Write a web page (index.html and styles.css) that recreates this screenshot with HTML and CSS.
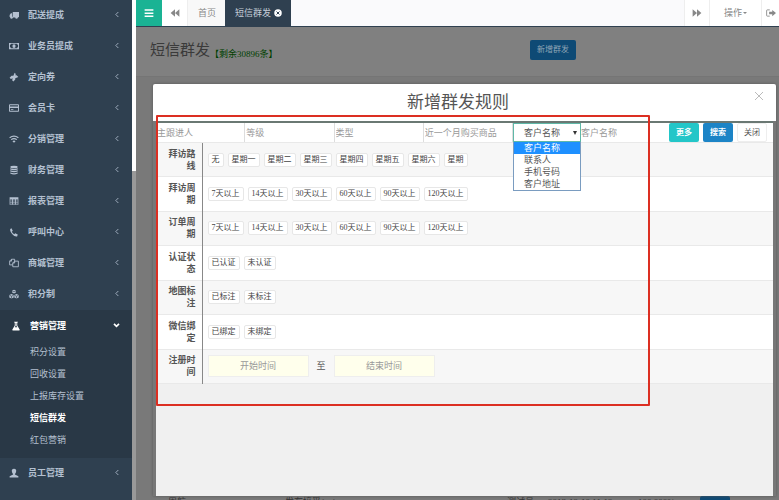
FILE: index.html
```html
<!DOCTYPE html>
<html lang="zh-CN">
  <head>
    <meta charset="UTF-8" />
    <meta name="viewport" content="width=device-width, initial-scale=1.0" />
    <title>短信群发</title>
    <link rel="stylesheet" href="styles.css">
  </head>
  <body>
    <nav class="sidebar">
      <ul class="menu">
        <li><a class="menu-item" href="#"><svg class="icon" viewBox="0 0 16 16"><path d="M6 3h10v8H6zM1 8l2-3h2v6H1zM2 11h13v1H2z"/><circle cx="4" cy="12" r="2"/><circle cx="12" cy="12" r="2"/></svg>配送提成<svg class="arrow" viewBox="0 0 6 8"><path d="M4 1L1 4l3 3"/></svg></a></li>
        <li><a class="menu-item" href="#"><svg class="icon" viewBox="0 0 16 16"><path fill-rule="evenodd" d="M0 3h16v10H0zM3 4.500a2 2 0 0 1-1.500 2v3a2 2 0 0 1 1.500 2h10a2 2 0 0 1 1.500-2v-3a2 2 0 0 1-1.500-2z"/><ellipse cx="8" cy="8" rx="2.500" ry="3"/></svg>业务员提成<svg class="arrow" viewBox="0 0 6 8"><path d="M4 1L1 4l3 3"/></svg></a></li>
        <li><a class="menu-item" href="#"><svg class="icon" viewBox="0 0 16 16"><path d="M9 1l2 2-1 2 2 0 3 3-3 1-2 1 0 2-3 3-2-2 1-3-3 1-2-2 3-3 3 0z"/></svg>定向券<svg class="arrow" viewBox="0 0 6 8"><path d="M4 1L1 4l3 3"/></svg></a></li>
        <li><a class="menu-item" href="#"><svg class="icon" viewBox="0 0 16 16"><path fill-rule="evenodd" d="M1 2h14l1 1v10l-1 1H1l-1-1V3zM1.500 3.500v2h13v-2zM1.500 8v4.500h13V8zM3 10h4v1H3z"/></svg>会员卡<svg class="arrow" viewBox="0 0 6 8"><path d="M4 1L1 4l3 3"/></svg></a></li>
        <li><a class="menu-item" href="#"><svg class="icon" viewBox="0 0 16 16"><path class="line" d="M1 6q7-5 14 0M3.500 9q4.500-3.500 9 0"/><path d="M5.500 11.500q2.500-2 5 0L8 14z"/></svg>分销管理<svg class="arrow" viewBox="0 0 6 8"><path d="M4 1L1 4l3 3"/></svg></a></li>
        <li><a class="menu-item" href="#"><svg class="icon" viewBox="0 0 16 16"><ellipse cx="8" cy="3" rx="6" ry="2"/><path d="M2 5q6 2.500 12 0v2q-6 2.500-12 0zM2 8.500q6 2.500 12 0v2q-6 2.500-12 0zM2 12q6 2.500 12 0v1.500q-6 3-12 0z"/></svg>财务管理<svg class="arrow" viewBox="0 0 6 8"><path d="M4 1L1 4l3 3"/></svg></a></li>
        <li><a class="menu-item" href="#"><svg class="icon" viewBox="0 0 16 16"><path fill-rule="evenodd" d="M1 2h14v12H1zM2 5.500v2h3v-2zM6.500 5.500v2h3v-2zM11 5.500v2h3v-2zM2 8.500v2h3v-2zM6.500 8.500v2h3v-2zM11 8.500v2h3v-2zM2 11.500v1.500h3v-1.500zM6.500 11.500v1.500h3v-1.500zM11 11.500v1.500h3v-1.500z"/></svg>报表管理<svg class="arrow" viewBox="0 0 6 8"><path d="M4 1L1 4l3 3"/></svg></a></li>
        <li><a class="menu-item" href="#"><svg class="icon" viewBox="0 0 16 16"><path d="M2 3l2-1 2 4-1.500 1.500q1.500 3 4 4L10 10l4 2-1 3q-4 1-8-4T2 3z"/></svg>呼叫中心<svg class="arrow" viewBox="0 0 6 8"><path d="M4 1L1 4l3 3"/></svg></a></li>
        <li><a class="menu-item" href="#"><svg class="icon" viewBox="0 0 16 16"><path class="thin" d="M6 11H1V5l3-3h5v3M4 2v3H1M6 8l3-3h6v9H6zM9 5v3H6"/></svg>商城管理<svg class="arrow" viewBox="0 0 6 8"><path d="M4 1L1 4l3 3"/></svg></a></li>
        <li><a class="menu-item" href="#"><svg class="icon" viewBox="0 0 16 16"><path d="M8 1l3 1.500v3L8 7 5 5.500v-3zM4 8l3.500 1.500v4L4 15 .5 13.500v-4zM12 8l3.500 1.500v4L12 15l-3.500-1.500v-4z"/><path class="cut" d="M5 3l3 1.500L11 3M1 10l3 1.500L7 10M9 10l3 1.500 3-1.500M4 11.500V15M12 11.500V15"/></svg>积分制<svg class="arrow" viewBox="0 0 6 8"><path d="M4 1L1 4l3 3"/></svg></a></li>
        <li class="open">
          <a class="menu-item" href="#"><svg class="icon" viewBox="0 0 16 16"><path fill-rule="evenodd" d="M5 1h6v1.500h-1V7l4 7q0 1-1 1H3q-1 0-1-1l4-7V2.500H5zM7.500 3v4.500L6 10h4L8.500 7.500V3z"/></svg>营销管理<svg class="arrow down" viewBox="0 0 8 6"><path d="M1 1l3 3 3-3"/></svg></a>
          <ul class="submenu">
            <li><a href="#">积分设置</a></li>
            <li><a href="#">回收设置</a></li>
            <li><a href="#">上报库存设置</a></li>
            <li><a class="active" href="#">短信群发</a></li>
            <li><a href="#">红包营销</a></li>
          </ul>
        </li>
        <li><a class="menu-item" href="#"><svg class="icon" viewBox="0 0 16 16"><path d="M8 1q4 0 3.500 4-.5 3-2 4.500v1L15 13v2H1v-2l5.500-2.500v-1Q5 8 4.500 5 4 1 8 1z"/></svg>员工管理<svg class="arrow" viewBox="0 0 6 8"><path d="M4 1L1 4l3 3"/></svg></a></li>
      </ul>
    </nav>
    <div class="scrollbar"><div class="thumb"></div></div>
    <main class="main">
      <header class="tabs">
        <button class="toggle" aria-label="菜单"><svg class="icon" viewBox="0 0 16 16"><path d="M1 2h14v2.500H1zM1 7h14v2.500H1zM1 12h14v2.500H1z"/></svg></button>
        <button class="tab-btn" aria-label="向左"><svg class="icon" viewBox="0 0 16 16"><path d="M8 2v12L1 8zM15 2v12L8 8z"/></svg></button>
        <a class="tab" href="#">首页</a>
        <a class="tab current" href="#">短信群发<svg class="icon" viewBox="0 0 16 16"><circle cx="8" cy="8" r="7.500"/><path class="cross" d="M5 5l6 6M11 5l-6 6"/></svg></a>
        <button class="tab-btn push" aria-label="向右"><svg class="icon" viewBox="0 0 16 16"><path d="M1 2l7 6-7 6zM8 2l7 6-7 6z"/></svg></button>
        <button class="tab-btn actions">操作<span class="caret"></span></button>
        <button class="tab-btn exit" aria-label="退出"><svg class="icon" viewBox="0 0 16 16"><path class="thin" d="M6 3H2q-1 0-1 1v8q0 1 1 1h4"/><path d="M5 6h5V3l6 5-6 5v-3H5z"/></svg></button>
      </header>
      <section class="heading">
        <h1>短信群发<small>【剩余30896条】</small></h1>
        <button class="btn dimmed">新增群发</button>
      </section>
      <div class="records">
        <span>周航</span>
        <span>发布接受(一)</span>
        <span>测试员</span>
        <span>2018-12-10 11:12</span>
        <span>100.000%</span>
        <button class="btn dimmed">查看</button>
      </div>

      <div class="modal" role="dialog" aria-labelledby="modal-title">
        <div class="modal-header">
          <h2 id="modal-title">新增群发规则</h2>
          <button class="close" aria-label="关闭窗口"><svg viewBox="0 0 10 10"><path d="M1 1l8 8M9 1L1 9"/></svg></button>
        </div>
        <div class="modal-body">
          <form class="filters">
            <input type="text" placeholder="主跟进人" aria-label="主跟进人">
            <input type="text" placeholder="等级" aria-label="等级">
            <input type="text" placeholder="类型" aria-label="类型">
            <input type="text" placeholder="近一个月购买商品" aria-label="近一个月购买商品">
            <div class="dropdown">
              <select aria-label="查询字段">
                <option>客户名称</option>
                <option>联系人</option>
                <option>手机号码</option>
                <option>客户地址</option>
              </select>
              <ul class="options">
                <li class="selected">客户名称</li>
                <li>联系人</li>
                <li>手机号码</li>
                <li>客户地址</li>
              </ul>
            </div>
            <input class="keyword" type="text" placeholder="客户名称" aria-label="客户名称">
            <div class="filter-buttons">
              <button type="button" class="btn info">更多</button>
              <button type="button" class="btn primary">搜索</button>
              <button type="button" class="btn white">关闭</button>
            </div>
          </form>
          <table class="rules">
            <tr>
              <th scope="row">拜访路线</th>
              <td><div class="chips"><button>无</button><button>星期一</button><button>星期二</button><button>星期三</button><button>星期四</button><button>星期五</button><button>星期六</button><button>星期</button></div></td>
            </tr>
            <tr>
              <th scope="row">拜访周期</th>
              <td><div class="chips"><button>7天以上</button><button>14天以上</button><button>30天以上</button><button>60天以上</button><button>90天以上</button><button>120天以上</button></div></td>
            </tr>
            <tr>
              <th scope="row">订单周期</th>
              <td><div class="chips"><button>7天以上</button><button>14天以上</button><button>30天以上</button><button>60天以上</button><button>90天以上</button><button>120天以上</button></div></td>
            </tr>
            <tr>
              <th scope="row">认证状态</th>
              <td><div class="chips"><button>已认证</button><button>未认证</button></div></td>
            </tr>
            <tr>
              <th scope="row">地图标注</th>
              <td><div class="chips"><button>已标注</button><button>未标注</button></div></td>
            </tr>
            <tr>
              <th scope="row">微信绑定</th>
              <td><div class="chips"><button>已绑定</button><button>未绑定</button></div></td>
            </tr>
            <tr>
              <th scope="row">注册时间</th>
              <td>
                <div class="dates">
                  <input type="text" placeholder="开始时间" aria-label="开始时间">
                  <span>至</span>
                  <input type="text" placeholder="结束时间" aria-label="结束时间">
                </div>
              </td>
            </tr>
          </table>
        </div>
        <div class="highlight"></div>
      </div>
    </main>
  </body>
</html>
```
FILE: styles.css
```css
* {
  box-sizing: border-box;
}
body {
  display: flex;
  height: 100vh;
  margin: 0;
  overflow: hidden;
  font-family: "Liberation Serif", "Noto Sans CJK SC", sans-serif;
  font-size: 9px;
  line-height: 12px;
  color: #555;
}
button,
input,
select {
  margin: 0;
  font: inherit;
  color: inherit;
}
ul {
  margin: 0;
  padding: 0;
  list-style: none;
}
a {
  color: inherit;
  text-decoration: none;
}
.icon {
  width: 10px;
  height: 10px;
  flex: none;
  fill: currentColor;
}
.icon .line,
.icon .thin {
  fill: none;
  stroke: currentColor;
  stroke-width: 2;
}
.icon .thin {
  stroke-width: 1.4;
}
.icon .cut {
  fill: none;
  stroke: #2f4050;
}

/* sidebar */
.sidebar {
  width: 132px;
  flex: none;
  overflow: hidden;
  background-color: #2f4050;
  color: #b4c0d0;
  font-weight: bold;
}
.menu-item {
  display: flex;
  align-items: center;
  height: 31px;
  padding: 0 12px 2px 9px;
}
.menu-item .icon {
  margin-right: 9px;
}
.arrow {
  width: 5px;
  height: 7px;
  margin-left: auto;
  fill: none;
  stroke: currentColor;
}
.arrow.down {
  width: 7px;
  height: 5px;
  stroke-width: 2;
}
.open {
  padding-bottom: 7px;
  background-color: #293846;
}
.open .menu-item {
  padding: 0 12px 0 11px;
  color: #fff;
}
.submenu {
  font-weight: normal;
}
.submenu a {
  display: block;
  padding-left: 30px;
  line-height: 22px;
}
.submenu .active {
  color: #fff;
  font-weight: bold;
}
.scrollbar {
  width: 4px;
  flex: none;
  background-color: #999;
}
.thumb {
  height: 171px;
  background-color: #fff;
}

/* page */
.main {
  position: relative;
  flex: 1;
  display: flex;
  flex-direction: column;
  min-width: 0;
  overflow: hidden;
  background-color: #797979;
}
.tabs {
  display: flex;
  height: 27px;
  flex: none;
  border-bottom: 1px solid #2f4050;
  background-color: #fafafc;
  color: #888;
}
.tabs button {
  display: flex;
  justify-content: center;
  align-items: center;
  width: 26px;
  padding: 0;
  border: 0;
  border-right: 1px solid #eee;
  background-color: #fff;
}
.tabs .toggle {
  border: 0;
  background-color: #1ab394;
  color: #fff;
}
.tabs .push {
  margin-left: auto;
  border-left: 1px solid #eee;
}
.tabs .actions {
  width: 52px;
}
.tabs .exit {
  width: 17px;
  border: 0;
}
.tab {
  display: flex;
  align-items: center;
  padding: 0 9px 0 10px;
  background-color: #f8f8f8;
}
.tab.current {
  gap: 3px;
  background-color: #2f4050;
  color: #c5cdd8;
}
.tab.current .icon {
  width: 8px;
  height: 8px;
  color: #fff;
}
.cross {
  stroke: #2f4050;
  stroke-width: 2;
}
.caret {
  margin-left: 1px;
  border: 2px solid transparent;
  border-top-color: #888;
  border-bottom: 0;
}
.heading {
  display: flex;
  justify-content: space-between;
  align-items: center;
  height: 50px;
  flex: none;
  padding: 0 203px 3px 14px;
  border-bottom: 1px solid #757575;
  background-color: #808080;
}
.heading h1 {
  display: flex;
  align-items: flex-end;
  margin: 0;
  font-size: 15px;
  font-weight: normal;
  line-height: 20px;
  color: #3a3a3a;
}
.heading small {
  font-size: 9px;
  line-height: 12px;
  color: #004000;
}
.btn {
  padding: 3px 6px;
  border: 1px solid transparent;
  border-radius: 2px;
  font-size: 8px;
}
.btn.dimmed {
  background-color: #0e4a75;
  color: #8fa5b5;
}
.btn.info {
  background-color: #23c6c8;
  color: #fff;
}
.btn.primary {
  background-color: #1c84c6;
  color: #fff;
}
.btn.white {
  border-color: #eee;
  background-color: #fff;
}
.records {
  display: grid;
  grid-template-columns: 117px 1fr 41px 90px 62px 79px;
  justify-items: start;
  height: 4px;
  margin-top: auto;
  padding-left: 32px;
  color: #333;
}

/* dialog */
.modal {
  position: absolute;
  inset: 84px 3px 4px 17px;
  display: flex;
  flex-direction: column;
  padding-right: 3px;
  border-radius: 2px 2px 0 0;
  background-color: #777;
  box-shadow: 0 0 3px #555;
}
.modal-header {
  display: flex;
  justify-content: center;
  align-items: center;
  height: 37px;
  flex: none;
  margin-right: -3px;
  border-radius: 2px 2px 0 0;
  background-color: #fff;
}
.modal-header h2 {
  flex: 1;
  margin: 0 0 0 9px;
  font-size: 17px;
  font-weight: normal;
  line-height: 24px;
  text-align: center;
}
.close {
  align-self: flex-start;
  width: 10px;
  height: 10px;
  margin: 7px 12px 0 0;
  padding: 0;
  border: 0;
  background: none;
}
.close svg {
  display: block;
  fill: none;
  stroke: #bbb;
}
.modal-body {
  flex: 1;
  margin-left: 3px;
  border-top: 2px solid #6a7873;
  background-color: #f0f0f0;
}
.filters {
  display: grid;
  grid-template-columns: repeat(4, 1fr) 68px 88px 104px;
  height: 20px;
  border-bottom: 1px solid #e9e9e9;
  background-color: #fff;
}
.filters input {
  width: 100%;
  min-width: 0;
  padding: 0 1px;
  border: 0;
  border-right: 1px solid #ddd;
  background: none;
}
.filters .keyword {
  padding: 0;
  border: 0;
}
::placeholder {
  color: #999;
  opacity: 1;
}
.dropdown {
  position: relative;
}
.dropdown::after {
  content: "";
  position: absolute;
  top: 8px;
  right: 4px;
  border: 2px solid transparent;
  border-top: 4px solid #333;
  border-bottom: 0;
}
.dropdown select {
  display: block;
  width: 100%;
  height: 19px;
  padding: 0 10px;
  border: 1px solid #5fb8a8;
  border-radius: 0;
  appearance: none;
  background-color: #fff;
}
.options {
  position: absolute;
  z-index: 1;
  top: 100%;
  left: 0;
  width: 100%;
  border: 1px solid #7a9cc0;
  border-top: 0;
  background-color: #fff;
}
.options li {
  padding-left: 10px;
}
.options .selected {
  background-color: #1e90ff;
  color: #fff;
}
.filter-buttons {
  display: flex;
  gap: 4px;
}
.filter-buttons .btn {
  flex: none;
  width: 30px;
  padding: 0;
}
.filter-buttons .info,
.filter-buttons .primary {
  font-weight: bold;
}
.rules {
  width: 100%;
  height: 241px;
  border-collapse: collapse;
}
.rules tr {
  border-bottom: 1px solid #e9e9e9;
  background-color: #fff;
}
.rules tr:nth-child(odd) {
  background-color: #f7f7f7;
}
.rules th {
  width: 46px;
  padding: 0 6px 0 12px;
  border-right: 1px solid #888;
  text-align: right;
}
.rules td {
  padding: 0 5px;
}
.chips {
  display: flex;
  gap: 4px;
}
.chips button {
  padding: 0 3px;
  border: 1px solid #e7e7e7;
  border-radius: 2px;
  background-color: #fff;
  font-size: 8px;
  color: #444;
}
.dates {
  display: flex;
  align-items: center;
  gap: 8px;
}
.dates input {
  width: 101px;
  height: 22px;
  border: 1px solid #eee;
  background-color: #ffffec;
  text-align: center;
}
.highlight {
  position: absolute;
  top: 31px;
  left: 3px;
  right: 126px;
  height: 291px;
  border: 2px solid #dc2f22;
  border-radius: 1px;
  pointer-events: none;
}
```
